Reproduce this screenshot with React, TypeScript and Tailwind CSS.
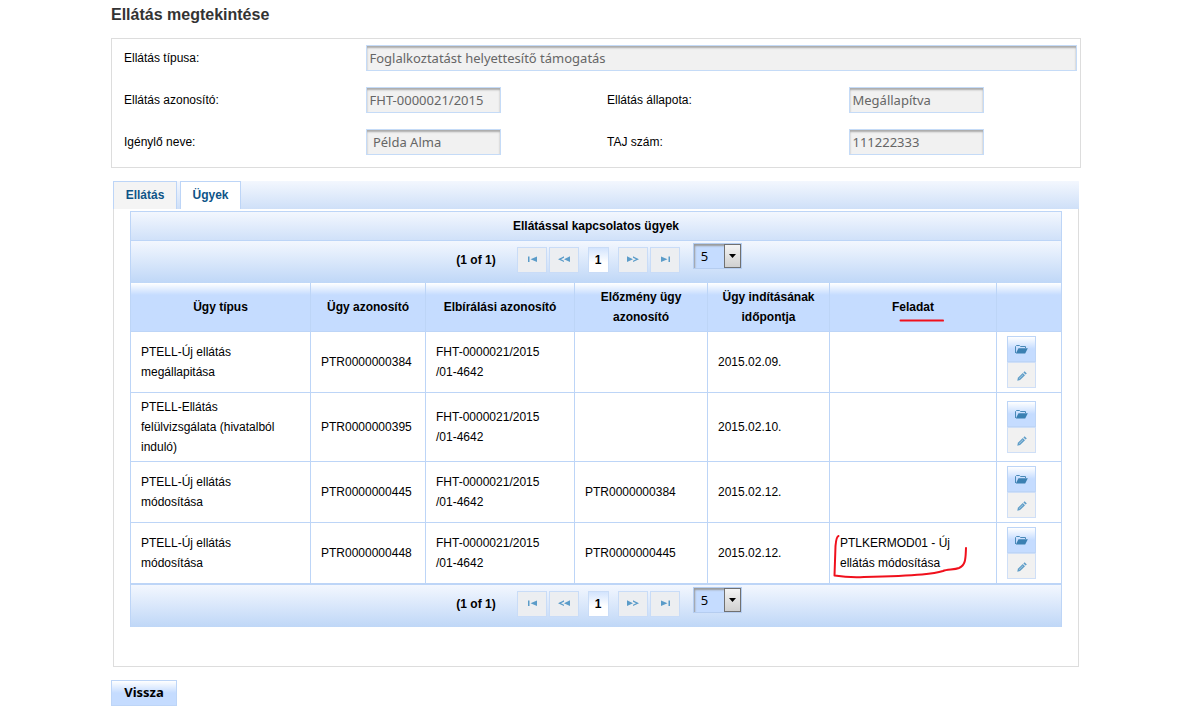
import React from "react";

type Row = {
  type: string;
  id: string;
  decision: [string, string];
  previous: string;
  started: string;
  task?: string;
};

const rows: Row[] = [
  { type: "PTELL-Új ellátás megállapitása", id: "PTR0000000384", decision: ["FHT-0000021/2015", "/01-4642"], previous: "", started: "2015.02.09." },
  { type: "PTELL-Ellátás felülvizsgálata (hivatalból induló)", id: "PTR0000000395", decision: ["FHT-0000021/2015", "/01-4642"], previous: "", started: "2015.02.10." },
  { type: "PTELL-Új ellátás módosítása", id: "PTR0000000445", decision: ["FHT-0000021/2015", "/01-4642"], previous: "PTR0000000384", started: "2015.02.12." },
  { type: "PTELL-Új ellátás módosítása", id: "PTR0000000448", decision: ["FHT-0000021/2015", "/01-4642"], previous: "PTR0000000445", started: "2015.02.12.", task: "PTLKERMOD01 - Új ellátás módosítása" },
];

const headers = ["Ügy típus", "Ügy azonosító", "Elbírálási azonosító", "Előzmény ügy azonosító", "Ügy indításának időpontja", "Feladat", ""];

const colWidths = ["w-[180px]", "w-[115px]", "w-[149px]", "w-[133px]", "w-[122px]", "w-[167px]", "w-[64px]"];

function Field({ id, label, value, wide = false }: { id: string; label: string; value: string; wide?: boolean }) {
  return (
    <>
      <label htmlFor={id} className="pl-[11px] leading-[26px]">
        {label}
      </label>
      <div className={wide ? "col-span-3 pl-[11px] pr-0.5" : "pl-[11px]"}>
        <input
          id={id}
          readOnly
          defaultValue={value}
          className={
            "block h-[26px] border border-[#c5dbf7] bg-[#f1f1f1] pl-[3px] font-['Noto_Sans',sans-serif] text-[13px] text-[#666] shadow-[inset_0_2px_2px_#aaa] outline-none " +
            (wide ? "w-full" : "w-[135px]")
          }
        />
      </div>
    </>
  );
}

function PageButton({ label, children }: { label: string; children: React.ReactNode }) {
  return (
    <button type="button" aria-label={label} className="mt-1 flex h-[26px] w-[30px] justify-center border border-[#c9dcf7] bg-[#eceef1] pt-2">
      <svg width="12" height="7" viewBox="0 0 12 7" fill="#5b9cc9" stroke="none">
        {children}
      </svg>
    </button>
  );
}

function Paginator({ id }: { id: string }) {
  return (
    <div className="flex h-[42px] items-start justify-center bg-linear-to-b from-[#f3f7fe] to-[#bfd7f7] pt-0.5 pl-1.5">
      <span className="mt-[7px] mr-[21px] text-[12px] leading-5 font-bold">(1 of 1)</span>
      <div className="flex gap-0.5">
        <PageButton label="Első oldal">
          <path d="M2 0.500h1.500v5.500H2zM11 0.500v5.500L4.500 3.200z" />
        </PageButton>
        <PageButton label="Előző oldal">
          <path d="M12 0.300v5.800L6 3.200zM6 0.300v1.400L3 3.200l3 1.500v1.400L0 3.200z" />
        </PageButton>
      </div>
      <button type="button" className="mx-[9px] mt-1 h-[26px] w-[21px] border border-[#c9dcf7] bg-linear-to-b from-[#d3e4fd] to-white to-60% text-[12px] font-bold">
        1
      </button>
      <div className="flex gap-0.5">
        <PageButton label="Következő oldal">
          <path d="M0 0.300v5.800L6 3.200zM6 0.300v1.400l3 1.500-3 1.500v1.400L12 3.200z" />
        </PageButton>
        <PageButton label="Utolsó oldal">
          <path d="M9.500 0.500H11v5.500H9.500zM2 0.500v5.500L8.500 3.200z" />
        </PageButton>
      </div>
      <div className="relative ml-[13px]">
        <select
          id={id}
          aria-label="Sorok száma"
          defaultValue="5"
          className="block h-[26px] w-[49px] appearance-none border border-[#b5cdf0] bg-[#c5dcff] pl-[7px] font-['Noto_Sans',sans-serif] text-[13px] shadow-[inset_1px_2px_2px_#999] outline-none"
        >
          <option>5</option>
          <option>10</option>
          <option>15</option>
        </select>
        <span className="pointer-events-none absolute top-px right-px flex h-6 w-[17px] items-center justify-center border border-[#707070] bg-linear-to-b from-[#f4f4f4] to-[#d0d0d0]">
          <svg width="7" height="4" viewBox="0 0 7 4">
            <path d="M0 0h7L3.5 4z" fill="#000" />
          </svg>
        </span>
      </div>
    </div>
  );
}

function RowActions() {
  return (
    <div className="flex w-[29px] flex-col">
      <button type="button" aria-label="Megnyitás" className="flex h-[26px] items-center justify-center border border-[#bdd5f7] bg-linear-to-b from-white to-[#c5dcff] to-50% pt-px">
        <svg width="13" height="9" viewBox="0 0 13 9">
          <path d="M0.500 8V1.500L1.500 0.500h3l1 1H10.500v1.500" fill="none" stroke="#4a8ab9" />
          <path d="M3.500 3.200H12.800L10.200 8.500H0.800z" fill="#3b80b2" />
        </svg>
      </button>
      <button type="button" aria-label="Szerkesztés" className="flex h-[26px] items-center justify-center border border-[#cfdff7] bg-[#f1f1f1] pt-px">
        <svg width="10" height="10" viewBox="0 0 10 10" fill="#5e9dc8">
          <path d="M0.300 9.700l0.600-2.900L5.800 2l2.200 2.200-4.900 4.900z" />
          <path d="M6.400 1.400L7.600 0.200l2.200 2.200-1.200 1.200z" />
          <path d="M2 7.700L6 3.800" stroke="#c4dbea" strokeWidth="0.7" />
        </svg>
      </button>
    </div>
  );
}

export default function App() {
  const base = "border-b border-r border-[#bdd5f7] py-1 last:border-r-0 ";
  const cell = base + "px-2.5";
  return (
    <main className="min-h-screen bg-white pr-[100px] pb-3.5 pl-[111px] font-['Liberation_Sans',Arial,sans-serif] text-[12px] leading-5 text-black">
      <h1 className="pt-[3px] text-[16px] leading-6 font-bold text-[#333]">Ellátás megtekintése</h1>

      <section className="mt-[11px] grid grid-cols-4 gap-y-4 border border-[#ddd] px-px pt-1.5 pb-3">
        <Field id="type" label="Ellátás típusa:" value="Foglalkoztatást helyettesítő támogatás" wide />
        <Field id="ident" label="Ellátás azonosító:" value="FHT-0000021/2015" />
        <Field id="state" label="Ellátás állapota:" value="Megállapítva" />
        <Field id="name" label="Igénylő neve:" value=" Példa Alma" />
        <Field id="taj" label="TAJ szám:" value="111222333" />
      </section>

      <section className="mt-[13px] mr-0.5 ml-0.5">
        <div role="tablist" className="flex h-7 gap-[3px] bg-linear-to-b from-[#f3f7fe] to-[#cfe0f8] font-bold text-[#0e5488]">
          <button type="button" role="tab" aria-selected="false" className="w-16 border border-b-0 border-[#bdd5f7] bg-[#f4f4f4] pb-0.5">
            Ellátás
          </button>
          <button type="button" role="tab" aria-selected="true" className="w-[61px] border border-b-0 border-[#bdd5f7] bg-white pb-0.5">
            Ügyek
          </button>
        </div>
        <div role="tabpanel" className="border border-t-0 border-[#ddd] px-4 pt-0.5 pb-[39px]">
          <div className="border border-b-0 border-[#bdd5f7]">
            <h2 className="border-b border-[#bdd5f7] bg-linear-to-b from-[#f3f7fe] to-[#d0e1f9] py-1 text-center font-bold">
              Ellátással kapcsolatos ügyek
            </h2>
            <Paginator id="rows-top" />
            <table className="w-full table-fixed border-separate border-spacing-0">
              <colgroup>
                {colWidths.map((w, i) => (
                  <col key={i} className={w} />
                ))}
              </colgroup>
              <thead>
                <tr>
                  {headers.map((h, i) => (
                    <th key={i} className={cell + " bg-linear-to-b from-white to-[#c5dcff] to-25% font-bold"}>
                      <span className="relative">
                        {h}
                        {h === "Feladat" && (
                          <svg className="absolute top-4.5 left-[7px]" width="46" height="5" viewBox="0 0 46 5">
                            <path d="M1.500 2.500C15 2.800 30 2 44 2.600" fill="none" stroke="#f0101c" strokeWidth="2" strokeLinecap="round" />
                          </svg>
                        )}
                      </span>
                    </th>
                  ))}
                </tr>
              </thead>
              <tbody>
                {rows.map((r) => (
                  <tr key={r.id}>
                    <td className={base + "pr-6 pl-2.5"}>{r.type}</td>
                    <td className={cell}>{r.id}</td>
                    <td className={cell}>
                      {r.decision[0]}
                      <br />
                      {r.decision[1]}
                    </td>
                    <td className={cell}>{r.previous}</td>
                    <td className={cell}>{r.started}</td>
                    <td className={cell}>
                      {r.task && (
                        <div className="relative">
                          {r.task}
                          <svg className="absolute -top-1 -left-2" width="138" height="52" viewBox="0 0 138 52">
                            <path
                              d="M6.500 7C4.500 7.500 4 11 3.500 17L2.500 46.500C12 48 22 48.500 32 48C52 47.500 72 47 90 45.500C100 44.500 106 43.500 111 42C115 40 122 41 127 39C134 36 133.500 29 134 19"
                              fill="none"
                              stroke="#f0101c"
                              strokeWidth="2"
                              strokeLinecap="round"
                              strokeLinejoin="round"
                            />
                          </svg>
                        </div>
                      )}
                    </td>
                    <td className={cell}>
                      <RowActions />
                    </td>
                  </tr>
                ))}
              </tbody>
            </table>
            <div className="border-t border-[#bdd5f7]">
              <Paginator id="rows-bottom" />
            </div>
          </div>
        </div>
      </section>

      <button type="button" className="mt-[13px] h-[26px] w-[66px] border border-[#bdd5f7] bg-linear-to-b from-white to-[#c5dcff] to-50% pb-0.5 font-['Noto_Sans',sans-serif] text-[13px] font-bold">
        Vissza
      </button>
    </main>
  );
}
